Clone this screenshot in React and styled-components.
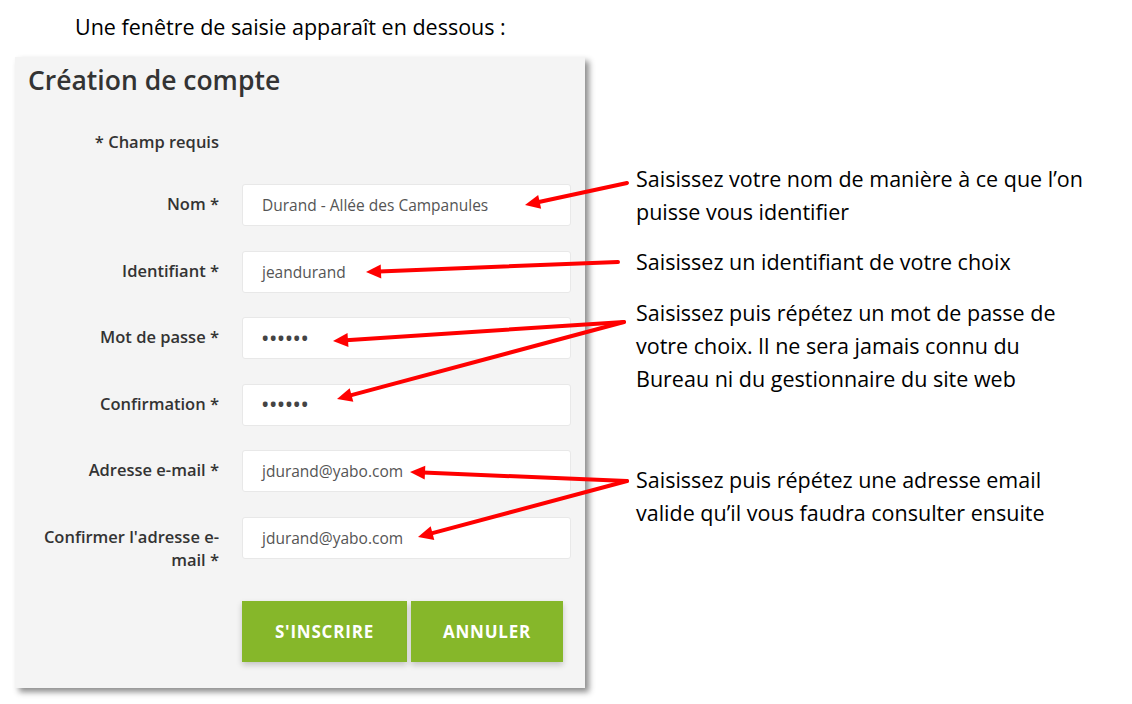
import styled, { createGlobalStyle } from "styled-components"

const GlobalStyle = createGlobalStyle`
body {
    margin:0;
    background:#fff;
}
`

const fields = [
    { label: "Nom *", value: "Durand - Allée des Campanules" },
    { label: "Identifiant *", value: "jeandurand" },
    { label: "Mot de passe *", value: "••••••", secret: true },
    { label: "Confirmation *", value: "••••••", secret: true },
    { label: "Adresse e-mail *", value: "jdurand@yabo.com" },
    { label: <>Confirmer l'adresse e-<br />mail *</>, value: "jdurand@yabo.com" },
]

const notes = [
    { gap: 105, lines: ["Saisissez votre nom de manière à ce que l’on", "puisse vous identifier"] },
    { gap: 17, lines: ["Saisissez un identifiant de votre choix"] },
    { gap: 18, lines: ["Saisissez puis répétez un mot de passe de", "votre choix. Il ne sera jamais connu du", "Bureau ni du gestionnaire du site web"] },
    { gap: 68, lines: ["Saisissez puis répétez une adresse email", "valide qu’il vous faudra consulter ensuite"] },
]

const arrows = [
    [627, 183, 525, 205],
    [618, 262, 366, 272],
    [624, 322, 333, 341],
    [624, 322, 337, 399],
    [627, 481, 410, 472],
    [627, 481, 418, 537],
]

function Arrow({ x1, y1, x2, y2 }) {
    const dx = x2 - x1
    const dy = y2 - y1
    const len = Math.sqrt(dx * dx + dy * dy)
    const ux = dx / len
    const uy = dy / len
    const bx = x2 - ux * 15
    const by = y2 - uy * 15
    const px = -uy * 7
    const py = ux * 7
    return (
        <g>
            <line x1={x1} y1={y1} x2={bx + ux * 2} y2={by + uy * 2} stroke="#ff0000" strokeWidth="4" strokeLinecap="round" />
            <polygon points={`${x2},${y2} ${bx + px},${by + py} ${bx - px},${by - py}`} fill="#ff0000" />
        </g>
    )
}

export default function App() {
    return (
        <Page>
            <GlobalStyle />
            <Caption>Une fenêtre de saisie apparaît en dessous :</Caption>
            <Main>
                <Panel>
                    <Title>Création de compte</Title>
                    <Required>* Champ requis</Required>
                    <Form>
                        {fields.map((f, i) => (
                            <Row key={i}>
                                <Label>{f.label}</Label>
                                <Input $secret={f.secret}>{f.value}</Input>
                            </Row>
                        ))}
                        <Buttons>
                            <Button $w={165}>S'INSCRIRE</Button>
                            <Button $w={152}>ANNULER</Button>
                        </Buttons>
                    </Form>
                </Panel>
                <Notes>
                    {notes.map((n, i) => (
                        <Note key={i} $gap={n.gap}>
                            {n.lines.map((l, j) => <div key={j}>{l}</div>)}
                        </Note>
                    ))}
                </Notes>
            </Main>
            <Overlay width="1132" height="704">
                {arrows.map((a, i) => <Arrow key={i} x1={a[0]} y1={a[1]} x2={a[2]} y2={a[3]} />)}
            </Overlay>
        </Page>
    )
}

const Page = styled.div`
position:relative;
width:1132px;
height:704px;
overflow:hidden;
font-family:"Open Sans", "Noto Sans", sans-serif;
`

const Caption = styled.div`
padding:15px 0 0 75px;
height:24px;
line-height:24px;
font-size:21.5px;
color:#000;
`

const Main = styled.div`
display:flex;
margin-top:18px;
`

const Panel = styled.div`
margin-left:15px;
width:570px;
box-sizing:border-box;
padding:6px 14px 26px 13px;
background:#f4f4f4;
box-shadow:4px 4px 6px rgba(0,0,0,0.45);
color:#333;
`

const Title = styled.div`
font-size:26.5px;
line-height:34px;
font-weight:600;
color:#333;
`

const Required = styled.div`
margin-top:35px;
width:191px;
text-align:right;
font-size:16.5px;
line-height:20px;
font-weight:600;
`

const Form = styled.div`
margin-top:32px;
display:flex;
flex-direction:column;
gap:24.6px;
`

const Row = styled.div`
display:grid;
grid-template-columns:191px 329px;
column-gap:23px;
`

const Label = styled.div`
padding-top:8px;
text-align:right;
font-size:16.5px;
line-height:23px;
font-weight:600;
color:#333;
`

const Input = styled.div`
height:42px;
box-sizing:border-box;
padding-left:19px;
display:flex;
align-items:center;
background:#fff;
border:1px solid #e8e8e8;
border-radius:3px;
font-size:${p => p.$secret ? "17px" : "15.5px"};
color:${p => p.$secret ? "#444" : "#555"};
font-weight:${p => p.$secret ? 700 : 400};
letter-spacing:${p => p.$secret ? "1.5px" : "0"};
`

const Buttons = styled.div`
margin:5px 0 0 214px;
display:flex;
gap:4px;
`

const Button = styled.div`
width:${p => p.$w}px;
height:61px;
display:flex;
align-items:center;
justify-content:center;
background:#86b72a;
color:#fff;
font-size:17px;
font-weight:700;
letter-spacing:0.8px;
box-shadow:0 3px 6px rgba(0,0,0,0.2);
`

const Notes = styled.div`
margin-left:51px;
display:flex;
flex-direction:column;
`

const Note = styled.div`
margin-top:${p => p.$gap}px;
font-size:21.5px;
line-height:33px;
color:#000;
white-space:nowrap;
`

const Overlay = styled.svg`
position:absolute;
left:0;
top:0;
pointer-events:none;
`
